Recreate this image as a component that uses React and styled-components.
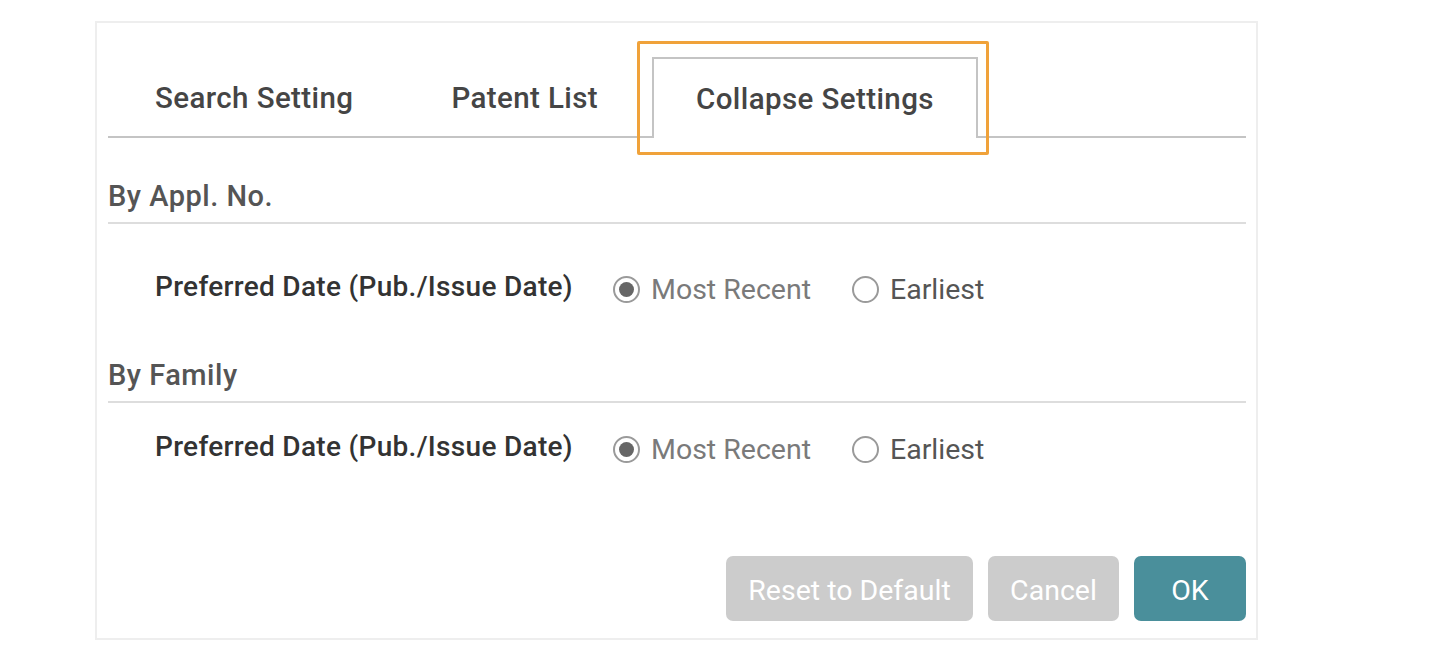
import React from "react";
import styled, { createGlobalStyle } from "styled-components";

const GlobalStyle = createGlobalStyle`
  body {
    margin: 0;
    background: #ffffff;
    font-family: Roboto, "Liberation Sans", sans-serif;
  }
`;

const Page = styled.div`
  padding: 21px 0 0 95px;
`;

const Card = styled.div`
  width: 1163px;
  height: 619px;
  box-sizing: border-box;
  border: 2px solid #eeeeee;
  padding: 0 10px 0 11px;
  display: flex;
  flex-direction: column;
`;

const TabBar = styled.div`
  position: relative;
  display: flex;
  align-items: flex-start;
  margin-top: 34px;
  border-bottom: 2px solid #c4c4c4;
  height: 79px;
`;

const Tab = styled.div`
  box-sizing: border-box;
  height: ${(p) => (p.$active ? 81 : 79)}px;
  padding: 1px ${(p) => (p.$active ? 42 : 45)}px 0;
  margin-left: ${(p) => (p.$active ? 7 : p.$first ? 0 : 4)}px;
  display: flex;
  align-items: center;
  font-size: 29.5px;
  letter-spacing: 0.4px;
  font-weight: 500;
  color: #454545;
  background: ${(p) => (p.$active ? "#ffffff" : "transparent")};
  border: 2px solid ${(p) => (p.$active ? "#c4c4c4" : "transparent")};
  border-bottom: none;
  position: relative;
  z-index: 1;
`;

const Highlight = styled.div`
  position: absolute;
  left: 529px;
  top: -16px;
  width: 352px;
  height: 114px;
  box-sizing: border-box;
  border: 3px solid #f0a23a;
  border-radius: 2px;
  z-index: 2;
`;

const SectionTitle = styled.div`
  margin-top: ${(p) => p.$top}px;
  padding-bottom: 10px;
  border-bottom: 2px solid #dddddd;
  font-size: 29px;
  letter-spacing: 0.5px;
  font-weight: 500;
  color: #555555;
  line-height: 32px;
`;

const OptionRow = styled.div`
  display: flex;
  align-items: center;
  padding-left: 47px;
  margin-top: ${(p) => p.$top}px;
`;

const OptionLabel = styled.div`
  font-size: 28px;
  letter-spacing: 0.3px;
  font-weight: 500;
  color: #333333;
  width: 458px;
  margin-top: -7px;
`;

const RadioGroup = styled.div`
  display: flex;
  align-items: center;
  gap: 41px;
`;

const RadioItem = styled.label`
  display: flex;
  align-items: center;
  gap: 11px;
  font-size: 28.5px;
  color: ${(p) => (p.$checked ? "#7a7a7a" : "#555555")};
`;

const RadioCircle = styled.span`
  width: 27px;
  height: 27px;
  box-sizing: border-box;
  border: 2px solid #9a9a9a;
  border-radius: 50%;
  display: flex;
  align-items: center;
  justify-content: center;
  &::after {
    content: "";
    width: 15px;
    height: 15px;
    border-radius: 50%;
    background: ${(p) => (p.$checked ? "#666666" : "transparent")};
  }
`;

const Footer = styled.div`
  margin-top: auto;
  margin-bottom: 17px;
  display: flex;
  justify-content: flex-end;
  gap: 15px;
`;

const Button = styled.button`
  width: ${(p) => p.$w}px;
  height: 65px;
  padding: 3px 0 0;
  border: none;
  border-radius: 7px;
  background: ${(p) => (p.$primary ? "#4a8f9b" : "#cccccc")};
  color: #ffffff;
  font-family: Roboto, "Liberation Sans", sans-serif;
  font-size: 28.5px;
  cursor: pointer;
`;

const Radio = ({ checked, children }) => (
  <RadioItem $checked={checked}>
    <RadioCircle $checked={checked} />
    {children}
  </RadioItem>
);

const Option = ({ top }) => (
  <OptionRow $top={top}>
    <OptionLabel>Preferred Date (Pub./Issue Date)</OptionLabel>
    <RadioGroup>
      <Radio checked>Most Recent</Radio>
      <Radio>Earliest</Radio>
    </RadioGroup>
  </OptionRow>
);

export default function App() {
  return (
    <>
      <GlobalStyle />
      <Page>
        <Card>
          <TabBar>
            <Tab $first>Search Setting</Tab>
            <Tab>Patent List</Tab>
            <Tab $active>Collapse Settings</Tab>
            <Highlight />
          </TabBar>
          <SectionTitle $top={42}>By Appl. No.</SectionTitle>
          <Option top={49} />
          <SectionTitle $top={53}>By Family</SectionTitle>
          <Option top={30} />
          <Footer>
            <Button $w={247}>Reset to Default</Button>
            <Button $w={131}>Cancel</Button>
            <Button $w={112} $primary>
              OK
            </Button>
          </Footer>
        </Card>
      </Page>
    </>
  );
}
